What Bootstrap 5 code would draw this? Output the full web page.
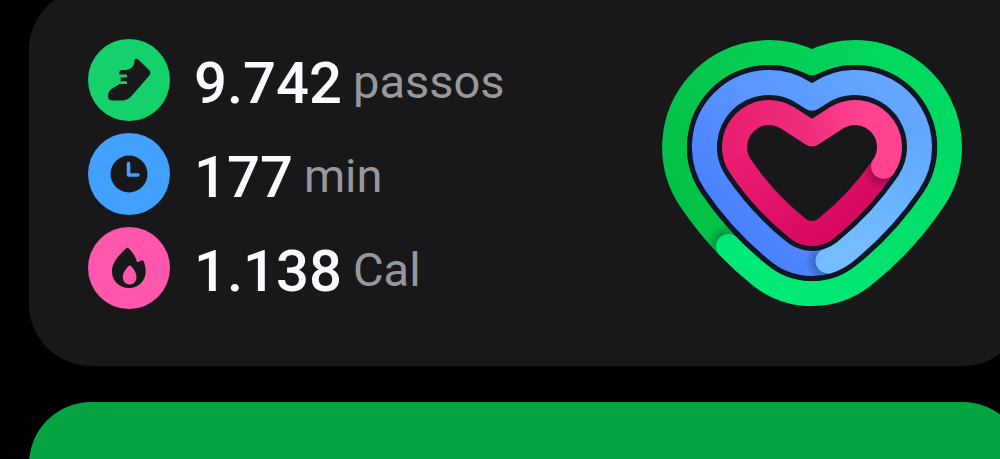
<!DOCTYPE html>
<html lang="pt-BR">
<head>
<meta charset="utf-8">
<meta name="viewport" content="width=device-width, initial-scale=1">
<title>Atividade diária</title>
<link href="https://cdn.jsdelivr.net/npm/bootstrap@5.3.0/dist/css/bootstrap.min.css" rel="stylesheet">
<style>
  body { background: #000; font-family: Roboto, sans-serif; }
  .feed { height: 100vh; overflow: hidden; }
  .stack { margin: -12px -25px 0 29px; gap: 36px; }
  .panel { border-radius: 62px; }
  .activity { background: #18181a; padding: 51px 63px 57px 59px; }
  .metrics { gap: 12px; }
  .metric { gap: 24px; line-height: 1; }
  .disc { width: 82px; height: 82px; color: #18181a; }
  .disc-steps { background: #14d16c; }
  .disc-time { background: #42a1ff; }
  .disc-energy { background: #ff57ab; }
  .reading { gap: 11px; padding-top: 5px; }
  .amount { font-size: 58px; font-weight: 500; color: #fafaff; }
  .unit { font-size: 47px; color: #98989c; padding-bottom: 3px; }
  .goal { background: #04a440; min-height: 160px; }
</style>
</head>
<body>
<main class="feed"><div class="stack d-flex flex-column">
  <section class="panel activity d-flex justify-content-between align-items-start">
    <ul class="metrics list-unstyled d-flex flex-column mb-0">
      <li class="metric d-flex align-items-center">
        <span class="disc disc-steps rounded-circle flex-shrink-0">
          <svg viewBox="0 0 82 82" width="82" height="82" fill="currentColor" aria-hidden="true">
            <path d="M46.500 21.500c.3-2 2.300-2.500 3.700-1L61 31c1.800 1.700 1.900 3.600.3 5.500L44 56.500c-3.200 3.500-6 5-10 5H24c-2.800 0-4-1.700-4-4.500 0-3.500 1.600-6 4.800-8L31 45.500l2-5-1.800-6c0-2.500 1-3.500 3-3.500 4 .3 7.500-.5 9.500-2.500 2.200-2 2.600-4 2.800-7z"/>
            <path d="M28 37h9.800M27 43.700h10.800" fill="none" stroke="#14d16c" stroke-width="2.800" stroke-linecap="round"/>
          </svg>
        </span>
        <span class="reading d-flex align-items-center"><span class="amount">9.742</span><span class="unit">passos</span></span>
      </li>
      <li class="metric d-flex align-items-center">
        <span class="disc disc-time rounded-circle flex-shrink-0">
          <svg viewBox="0 0 82 82" width="82" height="82" fill="none" aria-hidden="true">
            <circle cx="41" cy="41" r="18.500" fill="currentColor"/>
            <path d="M40.500 30.500v11.500H50" stroke="#42a1ff" stroke-width="3.500" stroke-linecap="round" stroke-linejoin="round"/>
          </svg>
        </span>
        <span class="reading d-flex align-items-center"><span class="amount">177</span><span class="unit">min</span></span>
      </li>
      <li class="metric d-flex align-items-center">
        <span class="disc disc-energy rounded-circle flex-shrink-0">
          <svg viewBox="0 0 82 82" width="82" height="82" fill="currentColor" aria-hidden="true">
            <path d="M38.200 21.200c.8-.7 1.800-.6 2.600.2 4 4 7 8.500 8.200 13.800 1.600-.2 3-.8 4.400-1.700 1-.5 2-.2 2.300 1 1.300 3.500 2 6.500 2 9.700C57.700 54 50.500 61 41 61s-17-7-17-16.500C24 36 29.500 29.500 38.200 21.200z"/>
            <path d="M40.500 39c.9-.8 1.700-.8 2.500.1 3.500 3.900 5.500 7.200 5.500 11 0 4.500-2.800 7.400-6.800 7.400s-6.900-2.900-6.900-7.400c0-3.900 2-7 5.700-11.100z" fill="#ff57ab"/>
          </svg>
        </span>
        <span class="reading d-flex align-items-center"><span class="amount">1.138</span><span class="unit">Cal</span></span>
      </li>
    </ul>
    <svg class="flex-shrink-0" viewBox="0 -1 300 268" width="300" height="268" fill="none" stroke-width="25" stroke-linejoin="round" role="img" aria-label="Metas de atividade">
      <defs>
        <linearGradient id="greenTop" gradientUnits="userSpaceOnUse" x1="10" y1="190" x2="290" y2="70"><stop stop-color="#00bf44"/><stop offset=".35" stop-color="#06ca50"/><stop offset="1" stop-color="#00da62"/></linearGradient>
        <linearGradient id="greenLow" gradientUnits="userSpaceOnUse" x1="290" y1="107" x2="120" y2="250"><stop stop-color="#00da62"/><stop offset="1" stop-color="#00e976"/></linearGradient>
        <linearGradient id="blueTop" gradientUnits="userSpaceOnUse" x1="90" y1="225" x2="240" y2="70"><stop stop-color="#477dff"/><stop offset=".5" stop-color="#5893ff"/><stop offset="1" stop-color="#62a6ff"/></linearGradient>
        <linearGradient id="blueLow" gradientUnits="userSpaceOnUse" x1="258" y1="107" x2="200" y2="205"><stop stop-color="#62a9ff"/><stop offset="1" stop-color="#72bcff"/></linearGradient>
        <linearGradient id="pinkLow" gradientUnits="userSpaceOnUse" x1="150" y1="200" x2="72" y2="107"><stop stop-color="#d90a61"/><stop offset="1" stop-color="#ea1f72"/></linearGradient>
        <linearGradient id="pinkTop" gradientUnits="userSpaceOnUse" x1="72" y1="107" x2="205" y2="90"><stop stop-color="#ea1f72"/><stop offset=".55" stop-color="#ef2d7c"/><stop offset="1" stop-color="#ff4391"/></linearGradient>
        <radialGradient id="capShade"><stop offset=".45" stop-color="#001020" stop-opacity=".28"/><stop offset="1" stop-color="#001020" stop-opacity="0"/></radialGradient>
      </defs>
      <path stroke="url(#greenTop)" d="M66.500 206.500A339 339 0 0 1 28.700 159.800A94.500 94.500 0 0 1 150 22.900A94.500 94.500 0 0 1 287.500 107"/>
      <circle cx="65" cy="204" r="20" fill="url(#capShade)"/>
      <path stroke="url(#greenLow)" stroke-linecap="round" d="M287.500 107A94.500 94.500 0 0 1 271.300 159.800A339 339 0 0 1 201.400 235.600A82.500 82.500 0 0 1 98.600 235.600A339 339 0 0 1 66.500 206.500"/>
      <path stroke="#101623" stroke-width="35" d="M150 58L142.100 52.900A64.500 64.500 0 0 0 53.500 143.100A309 309 0 0 0 117.300 212.100A52.500 52.500 0 0 0 182.700 212.100A309 309 0 0 0 246.500 143.100A64.500 64.500 0 0 0 157.900 52.900Z"/>
      <path stroke="url(#blueTop)" d="M166 221A52.500 52.500 0 0 1 117.300 212.100A309 309 0 0 1 53.500 143.100A64.500 64.500 0 0 1 142.100 52.900L150 58L157.900 52.900A64.500 64.500 0 0 1 257.500 107"/>
      <circle cx="163" cy="222" r="20" fill="url(#capShade)"/>
      <path stroke="url(#blueLow)" stroke-linecap="round" d="M257.500 107A64.500 64.500 0 0 1 246.500 143.100A309 309 0 0 1 182.700 212.100A52.500 52.500 0 0 1 166 221"/>
      <path stroke="url(#pinkLow)" d="M221.600 126.300A279 279 0 0 1 164 188.600A22.500 22.500 0 0 1 136 188.600A279 279 0 0 1 78.400 126.300A34.500 34.500 0 0 1 72.500 107"/>
      <circle cx="220" cy="130" r="19" fill="url(#capShade)"/>
      <path stroke="url(#pinkTop)" stroke-linecap="round" d="M72.500 107A34.500 34.500 0 0 1 125.800 78.100L150 93.800L174.200 78.100A34.500 34.500 0 0 1 221.600 126.300"/>
    </svg>
  </section>
  <section class="panel goal" aria-label="Meta"></section>
</div></main>
<script src="https://cdn.jsdelivr.net/npm/bootstrap@5.3.0/dist/js/bootstrap.bundle.min.js"></script>
</body>
</html>
